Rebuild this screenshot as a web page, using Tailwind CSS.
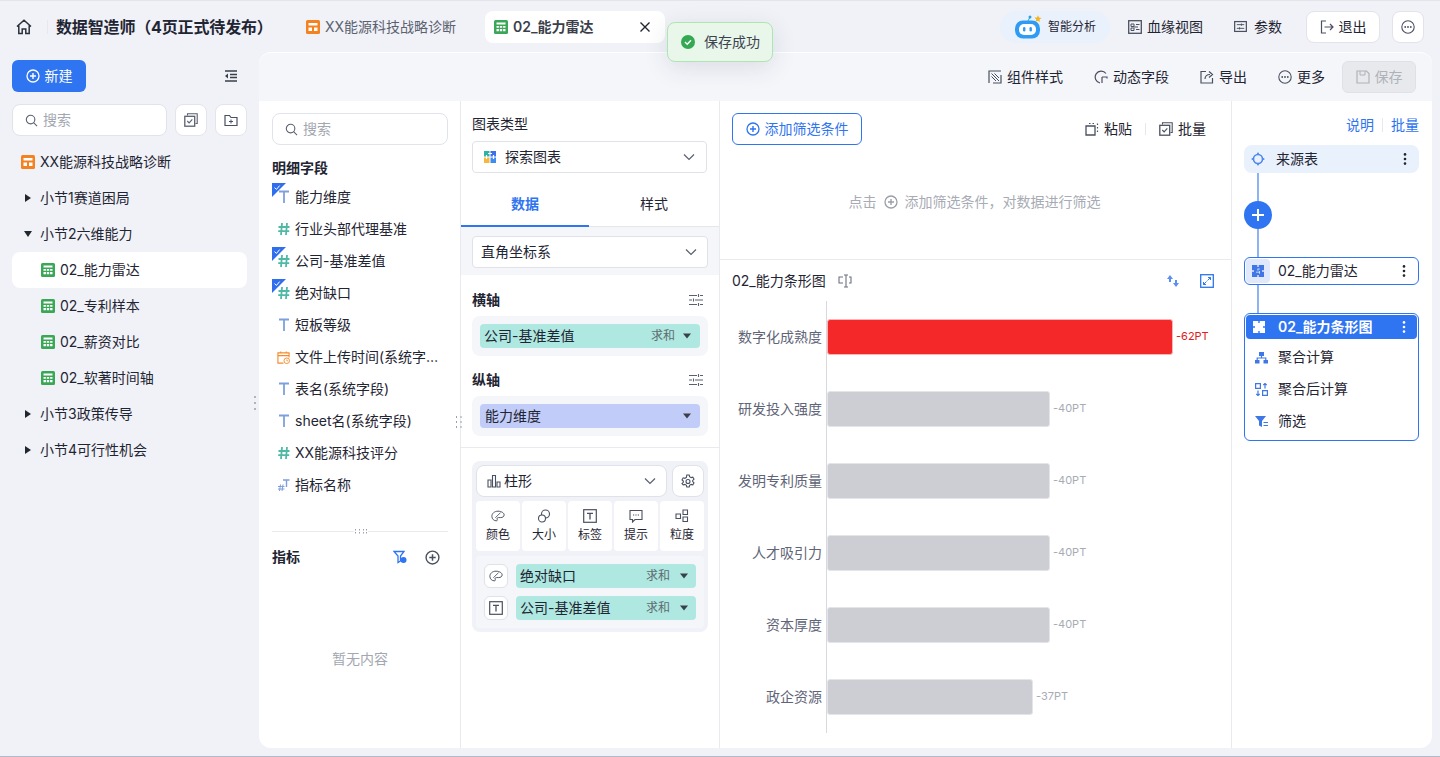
<!DOCTYPE html>
<html lang="zh-CN">
<head>
<meta charset="UTF-8">
<title>数据智造师</title>
<script src="https://cdn.jsdelivr.net/npm/@tailwindcss/browser@4"></script>
</head>
<body class="w-[1440px] h-[757px] overflow-hidden bg-[#f0f2f7] text-[#1f2533] text-sm font-[Inter,'Noto_Sans_CJK_SC',sans-serif]">

<svg class="hidden">
  <symbol id="grid-o" viewBox="0 0 14 14"><rect width="14" height="14" rx="1.500" fill="#f58220"/><path d="M2.500 3h9v2.500h-9zM2.500 7.500h3.500v3.500H2.500zM8 7.500h3.500v3.500H8z" fill="#fff"/></symbol>
  <symbol id="sheet" viewBox="0 0 14 14"><rect width="14" height="14" rx="1.500" fill="#3aa757"/><path d="M2.500 2.500h9v2h-9zM2.500 6h2.400v1.800H2.500zM5.800 6h2.400v1.800H5.800zM9.100 6h2.400v1.800H9.100zM2.500 9h2.400v2.200H2.500zM5.800 9h2.400v2.200H5.800zM9.100 9h2.400v2.200H9.100z" fill="#fff"/></symbol>
  <symbol id="search" viewBox="0 0 14 14"><circle cx="6" cy="6" r="4.600" fill="none" stroke="currentColor" stroke-width="1.200"/><path d="M9.500 9.500L13 13" stroke="currentColor" stroke-width="1.200"/></symbol>
  <symbol id="chev" viewBox="0 0 14 14"><path d="M2 4.500L7 9.500L12 4.500" fill="none" stroke="currentColor" stroke-width="1.200"/></symbol>
  <symbol id="plusc" viewBox="0 0 14 14"><circle cx="7" cy="7" r="6" fill="none" stroke="currentColor" stroke-width="1.300"/><path d="M7 4v6M4 7h6" stroke="currentColor" stroke-width="1.400"/></symbol>
  <symbol id="dots" viewBox="0 0 14 14"><circle cx="7" cy="7" r="6.200" fill="none" stroke="currentColor" stroke-width="1.100"/><circle cx="4.200" cy="7" r=".9" fill="currentColor"/><circle cx="7" cy="7" r=".9" fill="currentColor"/><circle cx="9.800" cy="7" r=".9" fill="currentColor"/></symbol>
  <symbol id="batch" viewBox="0 0 14 14"><path d="M3.500 2.500V.8h9.700v9.700h-1.700" fill="none" stroke="currentColor" stroke-width="1.100"/><rect x=".8" y="3.300" width="9.900" height="9.900" fill="none" stroke="currentColor" stroke-width="1.300"/><path d="M3.300 8l1.800 1.900 3.200-3.600" fill="none" stroke="currentColor" stroke-width="1.100"/></symbol>
  <symbol id="t" viewBox="0 0 12 14"><path d="M1 1.500h10M6 1.500V13" fill="none" stroke="#7f9fdc" stroke-width="1.800"/></symbol>
  <symbol id="hash" viewBox="0 0 12 14"><path d="M4 1L3 13M9 1L8 13M.5 5h11M.2 9.200h11" fill="none" stroke="#4fb9a6" stroke-width="1.800"/></symbol>
  <symbol id="check" viewBox="0 0 14 14"><path d="M0 0H14L0 14Z" fill="#2f6fed"/><path d="M2.500 4.600L4.500 6.400L7.600 2.600" fill="none" stroke="#fff" stroke-width="1"/></symbol>
  <symbol id="tune" viewBox="0 0 14 14"><path d="M0 2.500h8M11 2.500h3M0 7h3M6 7h8M0 11.500h8M11 11.500h3M9.500 1v3M4.500 5.500v3M9.500 10v3" fill="none" stroke="#5a6070" stroke-width="1.100"/></symbol>
  <symbol id="caret" viewBox="0 0 8 6"><path d="M0 .5H8L4 5.500Z" fill="currentColor"/></symbol>
  <symbol id="kebab" viewBox="0 0 4 14"><circle cx="2" cy="2.400" r="1.300" fill="currentColor"/><circle cx="2" cy="7" r="1.300" fill="currentColor"/><circle cx="2" cy="11.600" r="1.300" fill="currentColor"/></symbol>
  <symbol id="puzzle" viewBox="0 0 14 14"><path d="M1 1h5.300v2h1.400V1H13v5.300h-2v1.400h2V13H7.700v-2H6.300v2H1V7.700h2V6.300H1Z" fill="currentColor"/><path d="M6.300 5h2.500M7 5.200v1.500M5 8.200h3.500M8.500 7v2.800" stroke="#fff" stroke-opacity=".75" stroke-width=".9"/></symbol>
  <symbol id="palette" viewBox="0 0 16 14"><path d="M8 1.500C4 1.500 1 4 1 7.500 1 10.500 3.500 12.500 6 12.500c1.500 0 1.500-1 1-2-.4-1 .3-1.700 1.500-1.700h2.500C13.500 8.800 15 7.500 15 5.800 15 3.500 12 1.500 8 1.500Z" fill="none" stroke="#4a5060" stroke-width="1.100"/><path d="M5 9L11 3" stroke="#4a5060" stroke-width="1"/></symbol>
  <symbol id="tbox" viewBox="0 0 14 14"><rect x=".7" y=".7" width="12.600" height="12.600" fill="none" stroke="#4a5060" stroke-width="1.200"/><path d="M4 4.300h6M7 4.300V10.500" fill="none" stroke="#4a5060" stroke-width="1.300"/></symbol>
</svg>

<div class="h-px bg-[#e3e5ea]"></div>

<!-- header -->
<header class="h-[51px] flex items-center relative">
  <svg class="ml-4 w-4 h-4 text-[#2b303b]" viewBox="0 0 16 16"><path d="M1 7.500L8 1.200l7 6.300M2.800 6.500V14.500h3.400V10h3.600v4.500h3.400V6.500" fill="none" stroke="currentColor" stroke-width="1.500"/></svg>
  <span class="ml-[15px] w-px h-3.5 bg-[#e6e8ee]"></span>
  <span class="ml-2 w-[230px] text-base font-bold tracking-[-0.15px] whitespace-nowrap">数据智造师（4页正式待发布）</span>
  <div class="ml-5 flex items-center w-[179px] text-[#5b6170] gap-[5px]">
    <svg class="w-3.5 h-3.5"><use href="#grid-o"/></svg><span class="whitespace-nowrap">XX能源科技战略诊断</span>
  </div>
  <div class="w-[180px] h-8 bg-white rounded-lg flex items-center pl-[9px] gap-[5px]">
    <svg class="w-3.5 h-3.5"><use href="#sheet"/></svg>
    <span class="font-semibold text-[#3a3f4b] w-[122px]">02_能力雷达</span>
    <svg class="w-2.5 h-2.5 text-[#22262f]" viewBox="0 0 10 10"><path d="M.5.500l9 9M9.500.500l-9 9" stroke="currentColor" stroke-width="1.400"/></svg>
  </div>

  <div class="ml-auto mr-4 flex items-center">
    <div class="w-[110px] h-8 rounded-2xl bg-[#e9f1fc] flex items-center pl-[15px] gap-1.5">
      <svg class="w-[27px] h-6" viewBox="0 0 27 24"><circle cx="15" cy="2" r="1.500" fill="#2aa3d8"/><path d="M15 2l-2 4" stroke="#2aa3d8"/><path d="M23 .2l1 2.300 2.500.6-2 1.500.3 2.500-2-1.300-2.200 1 .6-2.400-1.700-1.800 2.500-.2Z" fill="#f5b31f"/><rect x="0" y="5.500" width="25" height="18" rx="8" fill="#2f9bf5"/><rect x="4" y="9" width="17" height="11" rx="5" fill="#fff"/><rect x="8" y="12" width="2.400" height="4.500" rx="1.200" fill="#2f9bf5"/><rect x="14.500" y="12" width="2.400" height="4.500" rx="1.200" fill="#2f9bf5"/></svg>
      <span class="text-xs">智能分析</span>
    </div>
    <div class="ml-[18px] flex items-center gap-[5px] w-[106px]">
      <svg class="w-3.5 h-3.5" viewBox="0 0 14 14"><rect x=".7" y=".7" width="12.600" height="12.600" fill="none" stroke="#4a5060" stroke-width="1.300"/><path d="M3 4h3v2.500H3zM3 8h3v2.500H3zM8 4.500h3.500M8 9.500h3.500M6 7h4" stroke="#4a5060" fill="none"/></svg>
      <span>血缘视图</span>
    </div>
    <div class="flex items-center gap-[7px] w-[72px]">
      <svg class="w-[13px] h-[13px]" viewBox="0 0 14 14"><rect x=".7" y="1.700" width="12.600" height="10.600" fill="none" stroke="#4a5060" stroke-width="1.300"/><path d="M3 5h8M3 9h8M8 3.800v2.400M6 7.800v2.400" stroke="#4a5060" fill="none"/></svg>
      <span>参数</span>
    </div>
    <button class="w-[74px] h-8 rounded-lg bg-white border border-[#e2e4ea] flex items-center justify-center gap-[5px]">
      <svg class="w-3.5 h-3.5" viewBox="0 0 14 14"><path d="M6 1H1.500v12H6M4.500 7H13M10 4l3 3-3 3" fill="none" stroke="#4a5060" stroke-width="1.200"/></svg>退出
    </button>
    <button class="ml-3 w-8 h-8 rounded-lg bg-white border border-[#e2e4ea] flex items-center justify-center text-[#4a5060]">
      <svg class="w-3.5 h-3.5"><use href="#dots"/></svg>
    </button>
  </div>

  <!-- toast -->
  <div class="absolute left-[667px] top-[21px] w-[106px] h-10 rounded-lg bg-[#e9f6ea] border border-[#ace6b0] shadow-[0_6px_24px_rgba(40,50,80,0.12)] flex items-center pl-[13px] gap-[9px] z-10">
    <svg class="w-3.5 h-3.5" viewBox="0 0 14 14"><circle cx="7" cy="7" r="7" fill="#34a853"/><path d="M4 7l2.200 2.200L10 5.200" fill="none" stroke="#fff" stroke-width="1.400"/></svg>
    <span class="text-[#3c4350]">保存成功</span>
  </div>
</header>

<div class="flex h-[696px]">
  <!-- left sidebar -->
  <aside class="w-[259px] shrink-0 px-3 pt-2 relative">
    <div class="flex items-center justify-between">
      <button class="w-[74px] h-8 rounded-md bg-[#2f74f0] text-white flex items-center justify-center gap-[5px]">
        <svg class="w-3.5 h-3.5"><use href="#plusc"/></svg>新建
      </button>
      <svg class="w-3.5 h-3.5 mr-[9px]" viewBox="0 0 14 14"><path d="M1 2h12M6 5.500h7M6 8.500h7M1 12h12" stroke="#3a3f4b" stroke-width="1.300"/><path d="M4 4.500L1 7l3 2.500Z" fill="#3a3f4b"/></svg>
    </div>
    <div class="mt-3 flex gap-2">
      <div class="w-[155px] h-8 rounded-lg bg-white border border-[#e0e3ea] flex items-center pl-3 gap-[5px] text-[#a3a7b0]">
        <svg class="w-[13px] h-[13px] text-[#5a6070]"><use href="#search"/></svg>搜索
      </div>
      <button class="w-8 h-8 rounded-lg bg-white border border-[#e3e5eb] flex items-center justify-center text-[#5a6070]"><svg class="w-3.5 h-3.5"><use href="#batch"/></svg></button>
      <button class="w-8 h-8 rounded-lg bg-white border border-[#e3e5eb] flex items-center justify-center">
        <svg class="w-3.5 h-3.5" viewBox="0 0 14 14"><path d="M1 2.500h4.500L7 4.500h6v8H1Z" fill="none" stroke="#4a5060" stroke-width="1.200"/><path d="M7 6.500v4M5 8.500h4" stroke="#4a5060"/></svg>
      </button>
    </div>
    <div class="mt-2">
      <div class="h-9 flex items-center pl-[9px] gap-[5px]"><svg class="w-3.5 h-3.5"><use href="#grid-o"/></svg>XX能源科技战略诊断</div>
      <div class="h-9 flex items-center pl-[13px] gap-[9px]"><svg class="w-1.5 h-2" viewBox="0 0 6 8"><path d="M0 0L6 4L0 8Z" fill="#22262f"/></svg>小节1赛道困局</div>
      <div class="h-9 flex items-center pl-3 gap-2"><svg class="w-2 h-1.5" viewBox="0 0 8 6"><path d="M0 0H8L4 6Z" fill="#22262f"/></svg>小节2六维能力</div>
      <div class="h-9 flex items-center pl-[29px] gap-[5px] bg-white rounded-lg"><svg class="w-3.5 h-3.5"><use href="#sheet"/></svg>02_能力雷达</div>
      <div class="h-9 flex items-center pl-[29px] gap-[5px]"><svg class="w-3.5 h-3.5"><use href="#sheet"/></svg>02_专利样本</div>
      <div class="h-9 flex items-center pl-[29px] gap-[5px]"><svg class="w-3.5 h-3.5"><use href="#sheet"/></svg>02_薪资对比</div>
      <div class="h-9 flex items-center pl-[29px] gap-[5px]"><svg class="w-3.5 h-3.5"><use href="#sheet"/></svg>02_软著时间轴</div>
      <div class="h-9 flex items-center pl-[13px] gap-[9px]"><svg class="w-1.5 h-2" viewBox="0 0 6 8"><path d="M0 0L6 4L0 8Z" fill="#22262f"/></svg>小节3政策传导</div>
      <div class="h-9 flex items-center pl-[13px] gap-[9px]"><svg class="w-1.5 h-2" viewBox="0 0 6 8"><path d="M0 0L6 4L0 8Z" fill="#22262f"/></svg>小节4可行性机会</div>
    </div>
    <!-- drag handle -->
    <svg class="absolute left-[253px] top-[344px] w-1 h-3.5" viewBox="0 0 4 14"><path d="M2 0v2M2 6v2M2 12v2" stroke="#9aa0ab" stroke-width="1.500"/></svg>
  </aside>

  <!-- main card -->
  <main class="w-[1173px] rounded-xl overflow-hidden bg-white flex flex-col border-t border-white">
    <div class="h-[48px] bg-[#f5f6fa] flex items-center justify-end pr-4">
      <div class="flex items-center gap-[5px] mr-[31px]"><svg class="w-3.5 h-3.5" viewBox="0 0 14 14"><path d="M1 13V1h12M13 5v8H5" fill="none" stroke="#4a5060" stroke-width="1.200"/><path d="M3.500 3.500L11 11M6.500 3.500L11 8M3.500 6.500L8 11" stroke="#4a5060"/></svg>组件样式</div>
      <div class="flex items-center gap-[5px] mr-[31px]"><svg class="w-3.5 h-3.5" viewBox="0 0 14 14"><path d="M12 3.500A6 6 0 1 0 6 13M8 7h5v1.500M8 7v6" fill="none" stroke="#4a5060" stroke-width="1.200"/></svg>动态字段</div>
      <div class="flex items-center gap-[5px] mr-[31px]"><svg class="w-3.5 h-3.5" viewBox="0 0 14 14"><path d="M6 1.500H1v11.500h11.500V8M5 9c0-3 2-4.500 5-4.500M9 1.500l3.500 3L9 7.500" fill="none" stroke="#4a5060" stroke-width="1.200"/></svg>导出</div>
      <div class="flex items-center gap-[5px] mr-[17px]"><svg class="w-3.5 h-3.5 text-[#4a5060]"><use href="#dots"/></svg>更多</div>
      <button class="w-[74px] h-8 rounded-md bg-[#e8e9ed] border border-[#dfe1e6] text-[#afb2b9] flex items-center justify-center gap-[5px]">
        <svg class="w-3.5 h-3.5" viewBox="0 0 14 14"><path d="M1 1h9.500L13 3.500V13H1Z" fill="none" stroke="#afb2b9" stroke-width="1.200"/><path d="M4 1v4h5V1" fill="none" stroke="#afb2b9"/></svg>保存
      </button>
    </div>

    <div class="flex-1 flex min-h-0">
      <!-- fields -->
      <section class="w-[202px] shrink-0 border-r border-[#e8eaee] pl-[13px] pr-3 relative flex flex-col">
        <div class="mt-3 h-8 rounded-lg border border-[#e0e3ea] flex items-center pl-3 gap-[5px] text-[#a3a7b0]">
          <svg class="w-[13px] h-[13px] text-[#5a6070]"><use href="#search"/></svg>搜索
        </div>
        <div class="mt-[13px] font-bold leading-5">明细字段</div>
        <div class="mt-[3px]">
          <div class="h-8 flex items-center relative"><svg class="absolute left-0 top-[2px] w-3.5 h-3.5"><use href="#check"/></svg><svg class="ml-[6px] w-3 h-3.5"><use href="#t"/></svg><span class="ml-[5px]">能力维度</span></div>
          <div class="h-8 flex items-center"><svg class="ml-[6px] w-3 h-3.5"><use href="#hash"/></svg><span class="ml-[5px]">行业头部代理基准</span></div>
          <div class="h-8 flex items-center relative"><svg class="absolute left-0 top-[2px] w-3.5 h-3.5"><use href="#check"/></svg><svg class="ml-[6px] w-3 h-3.5"><use href="#hash"/></svg><span class="ml-[5px]">公司-基准差值</span></div>
          <div class="h-8 flex items-center relative"><svg class="absolute left-0 top-[2px] w-3.5 h-3.5"><use href="#check"/></svg><svg class="ml-[6px] w-3 h-3.5"><use href="#hash"/></svg><span class="ml-[5px]">绝对缺口</span></div>
          <div class="h-8 flex items-center"><svg class="ml-[6px] w-3 h-3.5"><use href="#t"/></svg><span class="ml-[5px]">短板等级</span></div>
          <div class="h-8 flex items-center">
            <svg class="ml-[5px] w-[13px] h-[13px]" viewBox="0 0 14 14"><path d="M7 13H1V2h12v5M1 5h12M4 .500v2M10 .500v2" fill="none" stroke="#f58a2a" stroke-width="1.200"/><circle cx="10.500" cy="10.500" r="3" fill="none" stroke="#f58a2a"/><path d="M10.500 9v1.500h1.500" fill="none" stroke="#f58a2a" stroke-width=".8"/></svg>
            <span class="ml-[5px] truncate w-[147px]">文件上传时间(系统字段)</span>
          </div>
          <div class="h-8 flex items-center"><svg class="ml-[6px] w-3 h-3.5"><use href="#t"/></svg><span class="ml-[5px]">表名(系统字段)</span></div>
          <div class="h-8 flex items-center"><svg class="ml-[6px] w-3 h-3.5"><use href="#t"/></svg><span class="ml-[5px]">sheet名(系统字段)</span></div>
          <div class="h-8 flex items-center"><svg class="ml-[6px] w-3 h-3.5"><use href="#hash"/></svg><span class="ml-[5px]">XX能源科技评分</span></div>
          <div class="h-8 flex items-center">
            <svg class="ml-[6px] w-3 h-3.5" viewBox="0 0 12 14"><path d="M5 2h6.500M8.500 2V9" fill="none" stroke="#7f9fdc" stroke-width="1.400"/><path d="M2.500 6.500L1.500 13M5 6.500L4 13M0 8.500h6.500M0 11h6.500" fill="none" stroke="#7f9fdc"/></svg>
            <span class="ml-[5px]">指标名称</span>
          </div>
        </div>
        <div class="mt-[30px] border-t border-[#e8eaee] relative">
          <svg class="absolute left-[82px] -top-[5px] w-3.5 h-2.5 bg-white" viewBox="0 0 14 10"><path d="M1.500 2v6M5.500 2v6M9.500 2v6M12.500 2v6" stroke="#9aa0ab" stroke-dasharray="1.500 1.500"/></svg>
        </div>
        <div class="mt-[15px] flex items-center justify-between pr-2 h-5">
          <span class="font-bold">指标</span>
          <div class="flex items-center gap-[18px]">
            <svg class="w-3.5 h-3.5" viewBox="0 0 14 14"><path d="M1 1.500h10L7.500 6v5L5 12.500V6Z" fill="none" stroke="#2f74f0" stroke-width="1.300"/><circle cx="10.500" cy="10" r="3" fill="#2f74f0"/></svg>
            <svg class="w-[15px] h-[15px] text-[#4a5060]"><use href="#plusc"/></svg>
          </div>
        </div>
        <div class="mt-[82px] text-center leading-5 text-[#a3a7b0]">暂无内容</div>
        <svg class="absolute left-[196px] top-[315px] w-2 h-3.5" viewBox="0 0 8 14"><path d="M1.500 0v14M6 0v14" stroke="#9aa0ab" stroke-dasharray="2 3"/></svg>
      </section>

      <!-- chart config -->
      <section class="w-[259px] shrink-0 border-r border-[#e8eaee] flex flex-col">
        <div class="px-[11px] pr-3 pt-[14px]">
          <div class="leading-[18px]">图表类型</div>
          <div class="mt-[8px] h-8 rounded border border-[#dfe2e8] flex items-center pl-[10px] pr-[10px]">
            <svg class="w-3.5 h-3.5" viewBox="0 0 14 14"><path d="M1 1h5.500v5.500H1Z" fill="#2ab3a8"/><path d="M7.500 1H13v5.500H7.500Z" fill="#3f6fe8"/><path d="M1 7.500h5.500V13H1Z" fill="#f6b73c"/><path d="M7.500 7.500H13V13H7.500Z" fill="#3f8cf0"/><path d="M5 3.500h4M3.500 5v4M10.500 5v4" stroke="#fff" stroke-width="1.200"/></svg>
            <span class="ml-2">探索图表</span>
            <svg class="ml-auto w-3.5 h-3.5 text-[#5a6070]"><use href="#chev"/></svg>
          </div>
        </div>
        <div class="mt-[16px] h-[38px] flex border-b border-[#e4e6eb]">
          <div class="w-[128px] flex justify-center pt-[5px] font-semibold text-[#2f74f0] border-b-2 border-[#2f74f0] -mb-px">数据</div>
          <div class="flex-1 flex justify-center pt-[5px]">样式</div>
        </div>
        <div class="h-[48px] bg-[#f5f6f9] px-[11px] pt-[9px]">
          <div class="h-8 rounded bg-white border border-[#dfe2e8] flex items-center pl-2 pr-[9px]">
            直角坐标系
            <svg class="ml-auto w-3.5 h-3.5 text-[#5a6070]"><use href="#chev"/></svg>
          </div>
        </div>
        <div class="px-[11px] border-b border-[#e8eaee] h-[173px]">
          <div class="mt-[15px] flex items-center justify-between h-5 pr-[5px]">
            <span class="font-semibold">横轴</span><svg class="w-3.5 h-3.5"><use href="#tune"/></svg>
          </div>
          <div class="mt-[6px] h-10 rounded-lg bg-[#f5f6f9] p-2">
            <div class="h-6 rounded bg-[#aee8e0] flex items-center pl-1 pr-[9px]">公司-基准差值<span class="ml-auto text-xs text-[#5f6b70]">求和</span><svg class="ml-2 w-2 h-1.5 text-[#3a3f4b]"><use href="#caret"/></svg></div>
          </div>
          <div class="mt-[14px] flex items-center justify-between h-5 pr-[5px]">
            <span class="font-semibold">纵轴</span><svg class="w-3.5 h-3.5"><use href="#tune"/></svg>
          </div>
          <div class="mt-[6px] h-10 rounded-lg bg-[#f5f6f9] p-2">
            <div class="h-6 rounded bg-[#c2ccf8] flex items-center pl-[5px] pr-[9px]">能力维度<svg class="ml-auto w-2 h-1.5 text-[#3a3f4b]"><use href="#caret"/></svg></div>
          </div>
        </div>
        <div class="mt-[13px] mx-[11px] h-[171px] rounded-lg bg-[#f0f2f7] p-1">
          <div class="flex gap-[5px]">
            <div class="w-[191px] h-8 rounded-lg bg-white border border-[#dfe2e8] flex items-center pl-2.5 pr-[9px] gap-[3px]">
              <svg class="w-3.5 h-3.5" viewBox="0 0 14 14"><path d="M1 6h3v7H1ZM5.500 1.500h3V13h-3ZM10 8h3v5h-3Z" fill="none" stroke="#4a5060" stroke-width="1.100"/></svg>柱形
              <svg class="ml-auto w-3.5 h-3.5 text-[#5a6070]"><use href="#chev"/></svg>
            </div>
            <div class="w-8 h-8 rounded-lg bg-white border border-[#dfe2e8] flex items-center justify-center">
              <svg class="w-3.5 h-3.5" viewBox="0 0 14 14"><path d="M5.800 1h2.400l.4 1.700 1.500.9 1.700-.5 1.200 2.100-1.300 1.200v1.200l1.300 1.200-1.200 2.100-1.700-.5-1.500.9-.4 1.700H5.800l-.4-1.700-1.500-.9-1.700.5L1 9.500l1.300-1.200V7.100L1 5.900l1.200-2.100 1.700.5 1.500-.9Z" fill="none" stroke="#4a5060" stroke-width="1.100"/><circle cx="7" cy="7.500" r="2" fill="none" stroke="#4a5060" stroke-width="1.100"/></svg>
            </div>
          </div>
          <div class="mt-1 flex gap-0.5 text-xs">
            <div class="w-11 h-[50px] rounded bg-white flex flex-col items-center justify-center gap-1"><svg class="w-3.5 h-3.5"><use href="#palette"/></svg>颜色</div>
            <div class="w-11 h-[50px] rounded bg-white flex flex-col items-center justify-center gap-1"><svg class="w-3.5 h-3.5" viewBox="0 0 14 14"><circle cx="8.500" cy="5" r="4" fill="none" stroke="#4a5060" stroke-width="1.100"/><circle cx="5" cy="9.500" r="3.500" fill="#fff" stroke="#4a5060" stroke-width="1.100"/></svg>大小</div>
            <div class="w-11 h-[50px] rounded bg-white flex flex-col items-center justify-center gap-1"><svg class="w-3.5 h-3.5"><use href="#tbox"/></svg>标签</div>
            <div class="w-11 h-[50px] rounded bg-white flex flex-col items-center justify-center gap-1"><svg class="w-3.5 h-3.5" viewBox="0 0 14 14"><path d="M1 1.500h12v9H6l-2.500 2.500v-2.500H1Z" fill="none" stroke="#4a5060" stroke-width="1.100"/><path d="M4 6h1.200M6.400 6h1.200M8.800 6H10" stroke="#4a5060" stroke-width="1.200"/></svg>提示</div>
            <div class="w-11 h-[50px] rounded bg-white flex flex-col items-center justify-center gap-1"><svg class="w-3.5 h-3.5" viewBox="0 0 14 14"><path d="M1 5h4.500v4.500H1ZM8 1h4.500v4.500H8ZM8 8h4.500v4.500H8Z" fill="none" stroke="#4a5060" stroke-width="1.100"/></svg>粒度</div>
          </div>
          <div class="mt-[5px] h-[72px] rounded bg-[#f5f6f9] px-2 py-2 flex flex-col gap-2">
            <div class="flex items-center gap-2 h-6">
              <div class="w-6 h-6 rounded-md bg-white border border-[#dfe2e8] flex items-center justify-center"><svg class="w-3.5 h-3.5"><use href="#palette"/></svg></div>
              <div class="flex-1 h-6 rounded bg-[#aee8e0] flex items-center pl-1 pr-2">绝对缺口<span class="ml-auto text-xs text-[#5f6b70]">求和</span><svg class="ml-[10px] w-2 h-1.5 text-[#3a3f4b]"><use href="#caret"/></svg></div>
            </div>
            <div class="flex items-center gap-2 h-6">
              <div class="w-6 h-6 rounded-md bg-white border border-[#dfe2e8] flex items-center justify-center"><svg class="w-3.5 h-3.5"><use href="#tbox"/></svg></div>
              <div class="flex-1 h-6 rounded bg-[#aee8e0] flex items-center pl-1 pr-2">公司-基准差值<span class="ml-auto text-xs text-[#5f6b70]">求和</span><svg class="ml-[10px] w-2 h-1.5 text-[#3a3f4b]"><use href="#caret"/></svg></div>
            </div>
          </div>
        </div>
      </section>

      <!-- canvas -->
      <section class="w-[512px] shrink-0 border-r border-[#e8eaee] flex flex-col">
        <div class="h-[159px] border-b border-[#e8eaee] px-3 pt-3 flex flex-col shrink-0">
          <div class="flex items-center h-8">
            <button class="w-[130px] h-8 rounded-md border border-[#2f74f0] text-[#2f74f0] flex items-center justify-center gap-[5px]"><svg class="w-3.5 h-3.5"><use href="#plusc"/></svg>添加筛选条件</button>
            <div class="ml-auto flex items-center gap-[5px]"><svg class="w-3.5 h-3.5" viewBox="0 0 14 14"><path d="M1 4h9v9H1Z" fill="none" stroke="#4a5060" stroke-width="1.300"/><path d="M4 1.500h1.500M7.500 1.500H9M12.500 1.500V3M12.500 5v1.500M12.500 8.500V10" stroke="#4a5060" stroke-width="1.200"/></svg>粘贴</div>
            <span class="mx-[13px] w-px h-3 bg-[#e6e8ee]"></span>
            <div class="flex items-center gap-[5px] mr-[13px]"><svg class="w-3.5 h-3.5 text-[#4a5060]"><use href="#batch"/></svg>批量</div>
          </div>
          <div class="mt-[47px] flex items-center justify-center gap-[7px] leading-5 text-[#a8abb3] pr-0.5">点击<svg class="w-3.5 h-3.5 text-[#9a9ea8]"><use href="#plusc"/></svg><span>添加筛选条件，对数据进行筛选</span></div>
        </div>
        <div class="h-[41px] flex items-center pl-3 pr-[17px] shrink-0">
          <span>02_能力条形图</span>
          <svg class="ml-3 w-3.5 h-3.5" viewBox="0 0 14 14"><path d="M5 3H1v6h4M11 3h2v6h-2M6 1h4M6 13h4M8 1v12" fill="none" stroke="#6b7180" stroke-width="1.100"/></svg>
          <svg class="ml-auto w-3.5 h-3.5" viewBox="0 0 14 14"><path d="M4 1L1 5h2v3h2V5h2ZM10 13l3-4h-2V6H9v3H7Z" fill="#5b8ff0"/></svg>
          <svg class="ml-5 w-3.5 h-3.5" viewBox="0 0 14 14"><rect x=".7" y=".7" width="12.600" height="12.600" fill="none" stroke="#2f74f0" stroke-width="1.300"/><path d="M8 3.500h2.500V6M6 10.500H3.500V8M10.500 3.500L7.500 6.500M3.500 10.500L6.500 7.500" fill="none" stroke="#2f74f0"/></svg>
        </div>
        <div class="text-[#5f6577]">
          <div class="h-[72px] flex items-center"><span class="w-[102px] text-right">数字化成熟度</span><div class="ml-1 h-full border-l border-[#d7d9df] flex items-center"><div class="h-9 w-[346px] bg-[#f42828] border border-[#f7b5b5] rounded-[3px]"></div><span class="ml-[3px] text-[11px] text-[#d92121]">-62PT</span></div></div>
          <div class="h-[72px] flex items-center"><span class="w-[102px] text-right">研发投入强度</span><div class="ml-1 h-full border-l border-[#d7d9df] flex items-center"><div class="h-9 w-[223px] bg-[#cdced3] border border-[#e4e5e9] rounded-[3px]"></div><span class="ml-[3px] text-[11px] text-[#a8abb3]">-40PT</span></div></div>
          <div class="h-[72px] flex items-center"><span class="w-[102px] text-right">发明专利质量</span><div class="ml-1 h-full border-l border-[#d7d9df] flex items-center"><div class="h-9 w-[223px] bg-[#cdced3] border border-[#e4e5e9] rounded-[3px]"></div><span class="ml-[3px] text-[11px] text-[#a8abb3]">-40PT</span></div></div>
          <div class="h-[72px] flex items-center"><span class="w-[102px] text-right">人才吸引力</span><div class="ml-1 h-full border-l border-[#d7d9df] flex items-center"><div class="h-9 w-[223px] bg-[#cdced3] border border-[#e4e5e9] rounded-[3px]"></div><span class="ml-[3px] text-[11px] text-[#a8abb3]">-40PT</span></div></div>
          <div class="h-[72px] flex items-center"><span class="w-[102px] text-right">资本厚度</span><div class="ml-1 h-full border-l border-[#d7d9df] flex items-center"><div class="h-9 w-[223px] bg-[#cdced3] border border-[#e4e5e9] rounded-[3px]"></div><span class="ml-[3px] text-[11px] text-[#a8abb3]">-40PT</span></div></div>
          <div class="h-[72px] flex items-center"><span class="w-[102px] text-right">政企资源</span><div class="ml-1 h-full border-l border-[#d7d9df] flex items-center"><div class="h-9 w-[206px] bg-[#cdced3] border border-[#e4e5e9] rounded-[3px]"></div><span class="ml-[3px] text-[11px] text-[#a8abb3]">-37PT</span></div></div>
        </div>
      </section>

      <!-- right flow panel -->
      <section class="flex-1 pl-3 pr-[13px] pt-[15px] relative">
        <div class="flex justify-end items-center h-[18px] text-[#2f74f0]">
          <span>说明</span><span class="mx-[8px] w-px h-3.5 bg-[#e6e8ee]"></span><span>批量</span>
        </div>
        <div class="mt-[11px] h-7 rounded-lg bg-[#e9f1fc] flex items-center pl-[7px] pr-3">
          <svg class="w-3.5 h-3.5" viewBox="0 0 14 14"><circle cx="7" cy="7" r="4.500" fill="none" stroke="#4f86ee" stroke-width="1.600"/><path d="M7 0L8.500 2.500H5.500ZM7 14L8.500 11.500H5.500ZM0 7L2.500 5.500V8.500ZM14 7L11.500 5.500V8.500Z" fill="#4f86ee"/></svg>
          <span class="ml-[11px]">来源表</span>
          <svg class="ml-auto w-1 h-3.5 text-[#22262f]"><use href="#kebab"/></svg>
        </div>
        <div class="ml-[13px] w-0.5 h-7 bg-[#8fb2f3]"></div>
        <div class="w-7 h-7 rounded-full bg-[#2f74f0] flex items-center justify-center"><svg class="w-3 h-3" viewBox="0 0 12 12"><path d="M6 0v12M0 6h12" stroke="#fff" stroke-width="2"/></svg></div>
        <div class="ml-[13px] w-0.5 h-7 bg-[#8fb2f3]"></div>
        <div class="h-7 rounded-md border border-[#2f74f0] bg-white flex items-center pr-3 overflow-hidden">
          <div class="ml-px w-6 h-6 rounded bg-[#dfe9fb] flex items-center justify-center text-[#3f78e6]"><svg class="w-3.5 h-3.5"><use href="#puzzle"/></svg></div>
          <span class="ml-2">02_能力雷达</span>
          <svg class="ml-auto w-1 h-3.5 text-[#22262f]"><use href="#kebab"/></svg>
        </div>
        <div class="ml-[13px] w-0.5 h-7 bg-[#8fb2f3]"></div>
        <div class="h-[128px] rounded-md border border-[#2f74f0] p-px">
          <div class="h-6 rounded bg-[#2f74f0] text-white font-semibold flex items-center pl-[6px] pr-[11px]">
            <svg class="w-3.5 h-3.5"><use href="#puzzle"/></svg>
            <span class="ml-3">02_能力条形图</span>
            <svg class="ml-auto w-1 h-3.5"><use href="#kebab"/></svg>
          </div>
          <div class="h-8 mt-[2px] flex items-center pl-[9px] gap-[10px]"><svg class="w-[13px] h-[13px]" viewBox="0 0 13 13"><path d="M4 1h5v4H4ZM0 9h4.500v3.500H0ZM8.500 9H13v3.500H8.500Z" fill="#3f78e6"/><path d="M6.500 5v2M2.200 9V7h8.600v2" fill="none" stroke="#3f78e6" stroke-width="1.200"/></svg>聚合计算</div>
          <div class="h-8 flex items-center pl-[9px] gap-[10px]"><svg class="w-[13px] h-[13px]" viewBox="0 0 13 13"><path d="M.6.6h4.800v4.800H.6ZM7.600 7.600h4.800v4.800H7.600Z" fill="none" stroke="#3f78e6" stroke-width="1.200"/><path d="M10 .5v5M8.300 2L10 .5 11.700 2M3 7.500v5M1.300 11L3 12.500 4.700 11" fill="none" stroke="#3f78e6" stroke-width="1.200"/></svg>聚合后计算</div>
          <div class="h-8 flex items-center pl-[9px] gap-[10px]"><svg class="w-[13px] h-[13px]" viewBox="0 0 13 13"><path d="M0 1h11L7 6v6L4 10.500V6Z" fill="#3f78e6"/><path d="M8.500 7.500H13M8.500 10.500H13" stroke="#3f78e6" stroke-width="1.200"/></svg>筛选</div>
        </div>
      </section>
    </div>
  </main>
</div>

<div class="mt-2 h-px bg-[#b3bac5]"></div>
</body>
</html>
